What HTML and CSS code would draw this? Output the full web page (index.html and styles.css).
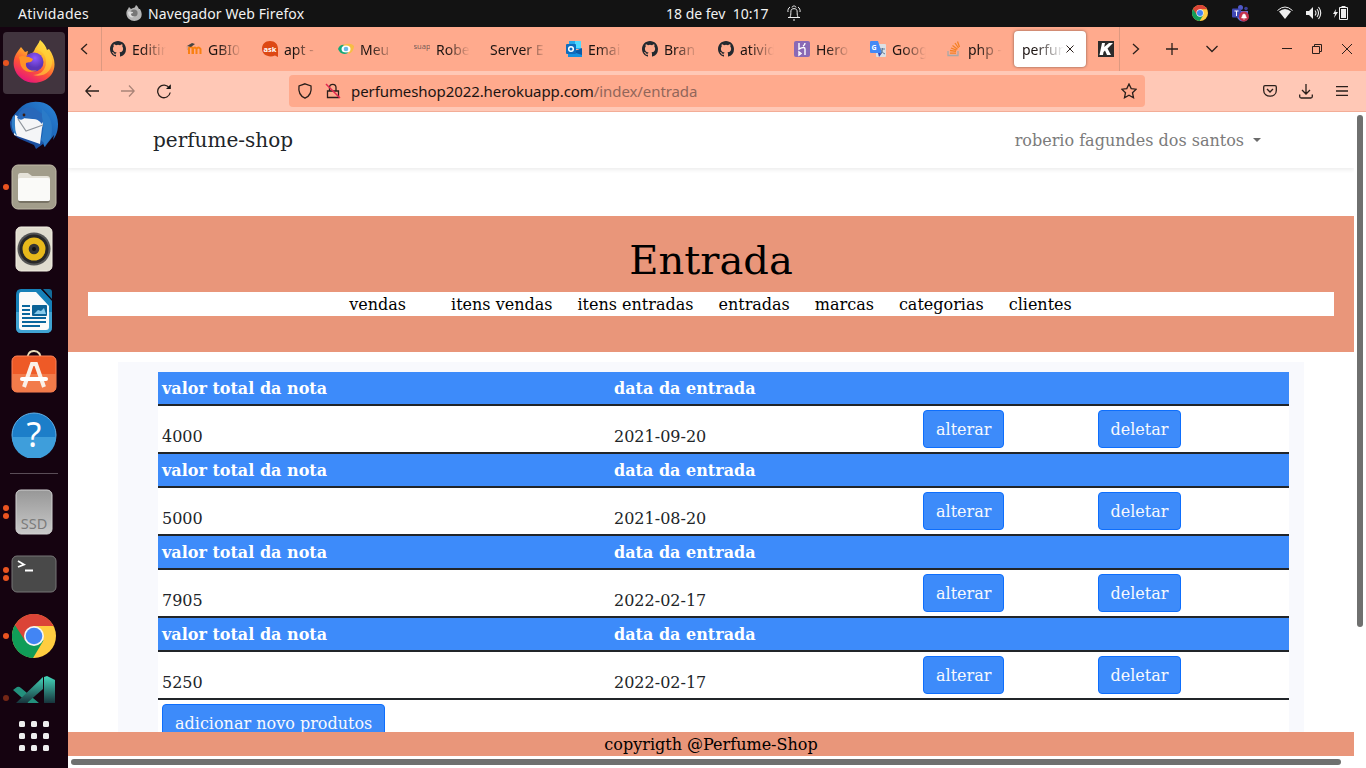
FILE: index.html
```html
<!DOCTYPE html>
<html lang="pt-BR">
<head>
<meta charset="utf-8">
<title>perfume-shop</title>
<link rel="stylesheet" href="styles.css">
</head>
<body>
<svg width="0" height="0" class="defs">
  <defs>
    <linearGradient id="ffBody" x1="0.8" y1="0" x2="0.3" y2="1"><stop offset="0" stop-color="#fff44f"/><stop offset=".35" stop-color="#ffb32c"/><stop offset=".65" stop-color="#ff5634"/><stop offset="1" stop-color="#e5117f"/></linearGradient>
    <radialGradient id="ffGlobe" cx=".55" cy=".3"><stop offset="0" stop-color="#9059ff"/><stop offset="1" stop-color="#5b35b8"/></radialGradient>
    <linearGradient id="tb" x1="1" y1="0" x2="0" y2="1"><stop offset="0" stop-color="#2c86d8"/><stop offset=".5" stop-color="#1b62b5"/><stop offset="1" stop-color="#17307c"/></linearGradient>
    <linearGradient id="ssd" x1="0" y1="0" x2="0" y2="1"><stop offset="0" stop-color="#979797"/><stop offset="1" stop-color="#c9c9c9"/></linearGradient>
    <linearGradient id="vs" gradientUnits="userSpaceOnUse" x1="0" y1="2" x2="0" y2="28"><stop offset="0" stop-color="#43d3b8"/><stop offset="1" stop-color="#17343c"/></linearGradient>
    <symbol id="octocat" viewBox="0 0 16 16"><path fill="#24292f" d="M8 0C3.58 0 0 3.58 0 8c0 3.54 2.29 6.53 5.47 7.59.4.07.55-.17.55-.38 0-.19-.01-.82-.01-1.49-2.01.37-2.53-.49-2.69-.94-.09-.23-.48-.94-.82-1.13-.28-.15-.68-.52-.01-.53.63-.01 1.08.58 1.23.82.72 1.21 1.87.87 2.33.66.07-.52.28-.87.51-1.07-1.78-.2-3.64-.89-3.64-3.95 0-.87.31-1.59.82-2.15-.08-.2-.36-1.02.08-2.12 0 0 .67-.21 2.2.82a7.6 7.6 0 0 1 4 0c1.53-1.04 2.2-.82 2.2-.82.44 1.1.16 1.92.08 2.12.51.56.82 1.27.82 2.15 0 3.07-1.87 3.75-3.65 3.95.29.25.54.73.54 1.48 0 1.07-.01 1.93-.01 2.2 0 .21.15.46.55.38A8.01 8.01 0 0 0 16 8c0-4.42-3.58-8-8-8z"/></symbol>
    <symbol id="chrome" viewBox="0 0 44 44">
      <circle cx="22" cy="22" r="22" fill="#ffcd40"/>
      <path d="M22 22 2.900 11A22 22 0 0 0 21 44L31.500 26.500z" fill="#109d58"/>
      <path d="M22 12h19.600A22 22 0 0 0 2.900 11L13.300 27z" fill="#db4437"/>
      <circle cx="22" cy="22" r="10" fill="#f5f5f5"/><circle cx="22" cy="22" r="8.300" fill="#4285f4"/>
    </symbol>
    <symbol id="fox" viewBox="0 0 42 44">
      <path d="M27 0c4 3 6 7 7 10l2-1c9 12 7 27-6 32-12 5-26-1-29-14-1-5 0-11 4-16L8 7l4 5 3-1-1 4c4-1 6-2 7-4 1-4 5-7 6-11z" fill="url(#ffBody)"/>
      <circle cx="21" cy="22" r="9.500" fill="url(#ffGlobe)"/>
      <path d="M24 10c5 1 9 5 9 12 0 9-7 13-13 13 12 3 20-5 19-15C38 14 33 12 27 0c0 4-2 7-3 10z" fill="#ffd43a" opacity=".65"/>
      <path d="M6 17c4-2 6 0 10 0l4 2c-1 4-5 3-7 4-1 6 5 9 11 7-8 5-17 0-17-9z" fill="#ff9226"/>
    </symbol>
  </defs>
</svg>
<div class="desktop">
  <header class="topbar">
    <span class="activities">Atividades</span>
    <svg class="app-icon" width="16" height="16" viewBox="0 0 16 16"><path d="M10 0c2 1 2 3 3 4l1 0c3 5 2 10-3 11.500C6 17 1 14 .500 9.500 0 7 1 5 2 4l1-2 2 2 2-1c2 0 2-1 3-3z" fill="#b5b5b5"/><circle cx="8" cy="8" r="3.600" fill="#777"/><path d="M2 7c2-1 3 0 5 0 0 2-2 1-2 2 0 2 2 3 4 2-3 3-7 1-7-4z" fill="#ddd"/></svg>
    <span class="app-name">Navegador Web Firefox</span>
    <span class="clock">18 de fev&nbsp; 10:17</span>
    <svg class="bell" width="14" height="16" viewBox="0 0 14 16" fill="none" stroke="#eee"><path d="M1 12.500h12M3 12c1.200-2 .600-4 1-6.500C4.500 3 9.500 3 10 5.500c.400 2.500-.200 4.500 1 6.500M6 15h2M1 7c-.500-2 .500-4 2-5M13 7c.500-2-.500-4-2-5M5 2.500C5 .500 9 .500 9 2.500"/></svg>
    <div class="tray">
      <svg class="tray-chrome" width="16" height="16"><use href="#chrome"/></svg>
      <svg class="tray-teams" width="17" height="17" viewBox="0 0 17 17"><circle cx="8.500" cy="2.500" r="2.500" fill="#5059c9"/><circle cx="14" cy="3.500" r="1.800" fill="#3b419c"/><path d="M5 6h11v6c0 6-9 6-11 0z" fill="#6870d6"/><rect y="3.500" width="9" height="9" rx="1" fill="#4048b5"/><path d="M2.500 6h4M4.500 6v5" stroke="#fff"/><circle cx="12" cy="11.500" r="5" fill="#c4314b"/><path d="M9.500 13c1-1 .500-4 2.500-4s1.500 3 2.500 4zM11 14h2" fill="#fff" stroke="#fff" stroke-width=".6"/></svg>
      <svg class="tray-wifi" width="16" height="14" viewBox="0 0 16 14"><path d="M.500 4.500Q8-2.500 15.500 4.500" fill="none" stroke="#eee"/><path d="M2 5.500Q8 .500 14 5.500L8 13z" fill="#eee"/></svg>
      <svg class="tray-vol" width="17" height="14" viewBox="0 0 17 14"><path d="M0 5h3l4-4v12L3 9H0z" fill="#eee"/><path d="M9 4.500q2 2.500 0 5M11 3q3 4 0 8M12.500 1q4.500 6 0 12" fill="none" stroke="#eee" stroke-width="1.100"/></svg>
      <svg width="15" height="16" viewBox="0 0 15 16"><path d="M3 4 0 9h2l-1 4 4-6H2.500z" fill="#eee"/><path d="M8.500 1.500h4M6.500 2.500h8v12h-8z" fill="none" stroke="#eee"/><path d="M8 4h5v9H8z" fill="#eee"/></svg>
    </div>
  </header>

  <nav class="dock">
    <div class="slot run focused"><svg class="up" width="42" height="44"><use href="#fox"/></svg></div>
    <div class="slot"><svg width="48" height="48" viewBox="0 0 48 48"><path d="M9 8Q17-1 30 1c10 1 18 10 18 22 0 9-3 13-5 16l1-5-7 9-2 3-2-3-7 5-2-4-14-6C2 34 0 28 0 21l3-6z" fill="url(#tb)"/><path d="M5 14 12 17 34 19l-2 8-2 16L4 34z" fill="#f4f5f7"/><path d="m8 18 8 12 17-6" fill="none" stroke="#8f959d" stroke-width="1.200"/><path d="M7 17Q10 4 24 7L35 15q-1 4-3 8-5-7-14-6l-3-1q-3 5-8 1z" fill="#2868ba"/><path d="M32 8q13 9 9 29l-7 9 0-4-3-3q4-13 1-23z" fill="#2b7bc8"/><circle cx="14" cy="14" r="1.400" fill="#3b1c12"/><path d="M3 15Q-1 28 7 35q-3-8-2-19z" fill="#2f80c9"/></svg></div>
    <div class="slot run"><svg width="46" height="46" viewBox="0 0 46 46"><rect x="1" y="1" width="44" height="44" rx="6" fill="#a29d8b" stroke="#c1bba8"/><path d="M7 11q0-2 2-2h8l4 4h15q3 0 3 3v20q0 3-3 3H10q-3 0-3-3z" fill="#787365"/><path d="M7 11q0-2 2-2h8l4 3h15q3 0 3 3v20q0 2-3 2H9q-2 0-2-2z" fill="#e5e2d9"/><rect x="7" y="14" width="32" height="23" rx="2" fill="#fafaf8"/></svg></div>
    <div class="slot"><svg width="38" height="46" viewBox="0 0 38 46"><rect x="1" y="1" width="36" height="44" rx="5" fill="#e0dccf" stroke="#f4f0e4"/><circle cx="19" cy="23" r="16.500" fill="#555"/><circle cx="19" cy="23" r="14.500" fill="#282828"/><circle cx="19" cy="23" r="11.500" fill="#e8b91b"/><circle cx="19" cy="23" r="5.300" fill="#353535"/><circle cx="19" cy="23" r="2" fill="#111"/></svg></div>
    <div class="slot"><svg width="38" height="46" viewBox="0 0 38 46"><path d="M6 1h20l11 11v27q0 6-6 6H6q-5 0-5-6V7q0-6 5-6z" fill="#1680b8"/><path d="M1 24h36v15q0 6-6 6H6q-5 0-5-6z" fill="#40a3d2"/><path d="M6 4h15l13 14v21q0 3-3 3H7q-3 0-3-3V7q0-3 2-3z" fill="#fafafa"/><path d="M25 0h13v14z" fill="#150310"/><path d="M28 1h6q3 0 3 3v7z" fill="#136c9b"/><path d="M7 18h8M7 22h8M7 26h8M7 30h24M7 34h24M7 38h18" stroke="#09669d" stroke-width="1.800"/><rect x="17" y="17" width="15" height="11" rx="1" fill="#0b6296"/><path d="m19 26 4-4 3 1 3-3 2 6z" fill="#88caeb"/></svg></div>
    <div class="slot"><svg class="up" width="46" height="46" viewBox="0 0 46 46"><path d="M16 12Q16 2 23 2t7 10" fill="none" stroke="#eadfba" stroke-width="1.800"/><rect x="1" y="7" width="44" height="36" rx="5" fill="#ee5a27" stroke="#ff8358"/><path d="M1 25h44v13q0 5-5 5H6q-5 0-5-5z" fill="#f27b4a"/><path d="m13 38 8-23h4l8 23" fill="none" stroke="#faf0e8" stroke-width="4"/><rect x="9" y="28" width="28" height="4" rx="2" fill="#fff"/></svg></div>
    <div class="slot"><svg width="46" height="46" viewBox="0 0 46 46"><circle cx="23" cy="23" r="22" fill="#1c7ec9" stroke="#63b2e8"/><path d="M1 25h44a22 22 0 0 1-44 0z" fill="#3e9edb"/><text x="23" y="35" text-anchor="middle" font-family="Noto Sans" font-size="34" fill="#fff">?</text></svg></div>
    <div class="rule"></div>
    <div class="slot run2"><svg width="38" height="46" viewBox="0 0 38 46"><rect x="1" y="1" width="36" height="44" rx="5" fill="url(#ssd)" stroke="#d2d2d2"/><text x="19" y="39.500" text-anchor="middle" font-family="Noto Sans" font-size="14.500" fill="#7b7b7b">SSD</text></svg></div>
    <div class="slot run2"><svg width="46" height="38" viewBox="0 0 46 38"><rect x="1" y="1" width="44" height="36" rx="5" fill="#494949" stroke="#777"/><path d="m7 6 6 3.500L7 12M14 15.500h8" fill="none" stroke="#fff" stroke-width="1.800"/></svg></div>
    <div class="slot run"><svg width="44" height="44"><use href="#chrome"/></svg></div>
    <div class="slot run clipped"><svg width="44" height="28" viewBox="0 0 44 28"><path d="M1 15l4-3q2-1 4 1l18 15H16z" fill="#23917d"/><path d="M31 2v12L15 28H4z" fill="url(#vs)"/><path d="M32 2l3-1 8 4v23H32z" fill="url(#vs)"/></svg></div>
    <svg class="apps" width="30" height="30" viewBox="0 0 30 30" fill="#eee"><rect width="6" height="6" rx="1.500"/><rect x="12" width="6" height="6" rx="1.500"/><rect x="24" width="6" height="6" rx="1.500"/><rect y="12" width="6" height="6" rx="1.500"/><rect x="12" y="12" width="6" height="6" rx="1.500"/><rect x="24" y="12" width="6" height="6" rx="1.500"/><rect y="24" width="6" height="6" rx="1.500"/><rect x="12" y="24" width="6" height="6" rx="1.500"/><rect x="24" y="24" width="6" height="6" rx="1.500"/></svg>
  </nav>

  <main class="browser">
    <div class="tabstrip">
      <div class="scroll-left"><svg width="8" height="12" viewBox="0 0 8 12" class="line"><path d="M7 1 1.500 6 7 11"/></svg></div>
      <div class="tabs">
        <div class="tab"><svg width="16" height="16"><use href="#octocat"/></svg><span>Editin</span></div>
        <div class="tab"><svg width="16" height="16" viewBox="0 0 16 16"><path d="M3 13V7q2-2 3.500 0v6M7 13V8q2-3 3.500 0v5M10.500 8q2-3 4 0v5" fill="none" stroke="#f98012" stroke-width="2"/><path d="m1 5 5-3 3 1-4 3z" fill="#444"/><path d="m1 5 .500 4" stroke="#b98" stroke-width=".7"/></svg><span>GBI0</span></div>
        <div class="tab"><svg width="16" height="16" viewBox="0 0 16 16"><path d="M8 0c5 0 8 3 8 8v8l-3-1.500C7 17 0 14 0 8c0-5 3-8 8-8z" fill="#dd4814"/><text x="8" y="10.500" text-anchor="middle" font-family="Open Sans" font-weight="700" font-size="7.500" fill="#fff">ask</text></svg><span>apt -</span></div>
        <div class="tab"><svg width="16" height="16" viewBox="0 0 16 16"><path d="M0 8q2-5 7-4l3 8q-7 3-10-4z" fill="#17a878"/><path d="M5 4q8-3 11 1 0 5-5 8z" fill="#f7bd45"/><ellipse cx="8" cy="8" rx="4.500" ry="3.500" fill="#fff"/><circle cx="8" cy="8" r="2.300" fill="#6bb8e5"/></svg><span>Meu</span></div>
        <div class="tab"><svg width="16" height="16" viewBox="0 0 16 16"><text y="8" x="-.500" font-family="Open Sans" font-size="7.600" fill="#735b57">suap</text></svg><span>Robe</span></div>
        <div class="tab wide"><span>Server E</span></div>
        <div class="tab"><svg width="16" height="16" viewBox="0 0 16 16"><rect x="3" width="12" height="8" fill="#28a8ea"/><path d="M9 0h6v7H9z" fill="#50d9ff"/><path d="M2 9h14v7H2z" fill="#1490df"/><path d="m7 11 9-4v7z" fill="#0a5aa8"/><rect y="3" width="10" height="10" rx="1" fill="#0f6cbd"/><circle cx="5" cy="8" r="2.300" fill="none" stroke="#fff" stroke-width="1.500"/></svg><span>Emai</span></div>
        <div class="tab"><svg width="16" height="16"><use href="#octocat"/></svg><span>Bran</span></div>
        <div class="tab"><svg width="16" height="16"><use href="#octocat"/></svg><span>ativid</span></div>
        <div class="tab"><svg width="16" height="16" viewBox="0 0 16 16"><rect width="16" height="16" rx="2" fill="#8a69b5"/><path d="M5 2v6q6-3 6 0v6M11 2q0 2-2 3M5 11v3l2-1.500z" fill="none" stroke="#fff" stroke-width="1.400"/></svg><span>Hero</span></div>
        <div class="tab"><svg width="16" height="16" viewBox="0 0 16 16"><rect x="6" y="3" width="10" height="13" rx="1" fill="#dbe0e5"/><path d="M0 1q0-1 1-1h7l4 12H1q-1 0-1-1z" fill="#4489f5"/><path d="m8 12 4 0-3 4z" fill="#3547b8"/><text x="1.500" y="8.500" font-family="Open Sans" font-weight="700" font-size="7" fill="#fff">G</text><path d="M10 8h5M12.500 7v1q0 3-2 5M11 9q1 3 4 4" stroke="#607d9b" fill="none"/></svg><span>Goog</span></div>
        <div class="tab"><svg width="16" height="16" viewBox="0 0 16 16"><path d="M2 10v4.500h10V10" stroke="#a8a8a8" fill="none" stroke-width="1.300"/><path d="M4 12.200h6M4 9.500l6 .800M5 7l5.500 2.200M6.500 4.500l5 3.800M9 2l3.500 5M11.500.500 13.500 6" stroke="#f48024" stroke-width="1.300"/></svg><span>php -</span></div>
        <div class="tab active"><span>perfum</span><svg width="8" height="8" viewBox="0 0 8 8" class="line thin"><path d="m.500.500 7 7M7.500.500l-7 7"/></svg></div>
        <div class="tab last"><svg width="16" height="16" viewBox="0 0 16 16"><rect width="16" height="16" fill="#2b2b2b"/><path d="M4 2h3l-.800 4L11 2h4L9.500 7.500 13 14H9L7 9.500 5.500 11 5 14H1.500z" fill="#fff"/></svg></div>
      </div>
      <div class="strip-tools">
        <svg class="line" width="8" height="12" viewBox="0 0 8 12"><path d="m1 1 5.500 5L1 11"/></svg>
        <svg class="line plus" width="12" height="12" viewBox="0 0 12 12"><path d="M6 0v12M0 6h12"/></svg>
        <svg class="line down" width="12" height="8" viewBox="0 0 12 8"><path d="m.500 1 5.500 5.500L11.500 1"/></svg>
        <svg class="line thin min" width="10" height="10" viewBox="0 0 10 10"><path d="M0 4.500h10"/></svg>
        <svg class="line thin max" width="10" height="10" viewBox="0 0 10 10"><path d="M.500 2.500h7v7h-7zM2.500 2.500v-2h7v7h-2"/></svg>
        <svg class="line thin close" width="10" height="10" viewBox="0 0 10 10"><path d="m0 0 10 10M10 0 0 10"/></svg>
      </div>
    </div>

    <div class="toolbar">
      <svg class="line back" width="14" height="12" viewBox="0 0 14 12"><path d="M14 6H1M6 .500.800 6 6 11.500"/></svg>
      <svg class="line fwd" width="14" height="12" viewBox="0 0 14 12"><path d="M0 6h13M8 .500 13.200 6 8 11.500"/></svg>
      <svg class="line reload" width="16" height="16" viewBox="0 0 16 16"><path d="M13.300 5A6.300 6.300 0 1 0 14.200 9.500"/><path d="M14.800 1.200V6H10z" fill="#111" stroke="none"/></svg>
      <div class="urlbar">
        <svg class="line shield" width="16" height="16" viewBox="0 0 16 16"><path d="M8 .800 14 3c.700 5-1 10-6 12.200C3 13 1.300 8 2 3z"/></svg>
        <svg class="line lock" width="16" height="16" viewBox="0 0 16 16"><path d="M4.500 8V4.500C4.500.200 11 .200 11 4.500V8M2.500 8h11v6.500h-11z"/><path d="m1 1 14 14" stroke="#e22850" stroke-width="1.500"/></svg>
        <span class="url"><b>perfumeshop2022.herokuapp.com</b>/index/entrada</span>
        <svg class="line star" width="16" height="16" viewBox="0 0 16 16"><path d="m8 1 2.200 4.600 5 .600-3.700 3.500 1 5L8 12.200l-4.500 2.500 1-5L.800 6.200l5-.600z"/></svg>
      </div>
      <div class="actions">
        <svg class="line" width="14" height="12" viewBox="0 0 14 12"><path d="M2 .700h10q1.300 0 1.300 1.300v3.500c0 7.500-12.600 7.500-12.600 0V2Q.700.700 2 .700zM4 4l3 3 3-3"/></svg>
        <svg class="line" width="14" height="15" viewBox="0 0 14 15"><path d="M7 0v10M3 6l4 4 4-4M.700 10.500v2q0 1.500 1.500 1.500h9.600q1.500 0 1.500-1.500v-2"/></svg>
        <svg class="line" width="12" height="10" viewBox="0 0 12 10"><path d="M0 .700h12M0 5h12M0 9.300h12"/></svg>
      </div>
    </div>

    <div class="viewport">
      <div class="page">
        <div class="navbar"><span class="brand">perfume-shop</span><span class="user">roberio fagundes dos santos<i class="caret"></i></span></div>
        <header class="hero">
          <h1>Entrada</h1>
          <nav class="menu"><a class="first">vendas</a><a>itens vendas</a><a>itens entradas</a><a>entradas</a><a>marcas</a><a>categorias</a><a>clientes</a></nav>
        </header>
        <section class="panel">
          <table class="notes">
            <colgroup><col class="c1"><col class="c2"><col class="c3"><col class="c4"></colgroup>
            <tr class="head"><th>valor total da nota</th><th>data da entrada</th><th></th><th></th></tr>
            <tr><td>4000</td><td>2021-09-20</td><td><a class="btn">alterar</a></td><td><a class="btn del">deletar</a></td></tr>
            <tr class="head"><th>valor total da nota</th><th>data da entrada</th><th></th><th></th></tr>
            <tr><td>5000</td><td>2021-08-20</td><td><a class="btn">alterar</a></td><td><a class="btn del">deletar</a></td></tr>
            <tr class="head"><th>valor total da nota</th><th>data da entrada</th><th></th><th></th></tr>
            <tr><td>7905</td><td>2022-02-17</td><td><a class="btn">alterar</a></td><td><a class="btn del">deletar</a></td></tr>
            <tr class="head"><th>valor total da nota</th><th>data da entrada</th><th></th><th></th></tr>
            <tr><td>5250</td><td>2022-02-17</td><td><a class="btn">alterar</a></td><td><a class="btn del">deletar</a></td></tr>
            <tr><td colspan="4"><a class="btn">adicionar novo produtos</a></td></tr>
          </table>
        </section>
        <footer class="footer">copyrigth @Perfume-Shop</footer>
      </div>
      <div class="vbar"><div class="vthumb"></div></div>
      <div class="hbar"><div class="hthumb"></div></div>
    </div>
  </main>
</div>
</body>
</html>
```

FILE: styles.css
```css
* { box-sizing: border-box; }
body { margin: 0; overflow: hidden; }
svg { display: block; flex: none; }
.defs { position: absolute; }

.desktop {
  width: 1366px; height: 768px;
  display: grid; grid-template: 27px 741px / 68px 1298px;
  font-family: "Noto Sans", "Open Sans", sans-serif;
}

/* system bar */
.topbar {
  grid-column: 1 / 3; display: flex; align-items: center;
  background: #131313; color: #f2f2f2; font-size: 14px; white-space: nowrap;
}
.activities { width: 109px; padding-left: 18px; letter-spacing: .3px; }
.app-icon { margin: -2px 6px 0 17px; }
.app-name { width: 518px; letter-spacing: .1px; }
.clock { width: 121px; letter-spacing: 0; }
.bell { margin-top: -2px; }
.tray { display: flex; align-items: center; margin-left: auto; padding-right: 18px; }
.tray svg { margin-top: -1px; }
.tray-chrome { margin-right: 24px; }
.tray-teams { margin-right: 28px; }
.tray-wifi { margin-right: 13px; }
.tray-vol { margin-right: 10px; }

/* dock */
.dock {
  display: flex; flex-direction: column; align-items: center;
  padding-top: 5px; background: #150310;
}
.slot { width: 62px; height: 62px; flex: none; display: grid; place-items: center; position: relative; }
.slot .up { margin-bottom: 3px; }
.focused { background: #41343e; border-radius: 4px; }
.run::before, .run2::before, .run2::after {
  content: ""; position: absolute; left: 0; top: 28px;
  width: 6px; height: 6px; border-radius: 50%; background: #e95420;
}
.run2::before { top: 24px; }
.run2::after { top: 32px; }
.rule { width: 48px; height: 1px; flex: none; margin: 7px 0; background: #5a4d57; }
.clipped { height: 36px; overflow: hidden; place-items: end center; }
.clipped::before { opacity: .45; }
.apps { margin-top: 18px; }

/* browser chrome */
.browser { display: grid; grid-template-rows: 44px 41px 656px; min-width: 0; }
.line { fill: none; stroke: #2a1f1b; stroke-width: 1.3; }
.thin { stroke-width: 1; }
.tabstrip { display: flex; background: #ffaa8d; }
.scroll-left {
  width: 34px; padding-left: 12px; display: flex; align-items: center;
  border-right: 1px solid #dd9980;
}
.tabs { width: 1018px; display: flex; gap: 4px; align-items: center; overflow: hidden; border-right: 1px solid #dd9980; }
.tab {
  width: 72px; height: 36px; flex: none; padding: 0 8px;
  display: flex; align-items: center; gap: 6px;
  font-size: 14px; color: #1c1412;
}
.tab span {
  width: 34px; overflow: hidden; white-space: nowrap;
  -webkit-mask-image: linear-gradient(90deg, #000 30%, transparent);
  mask-image: linear-gradient(90deg, #000 30%, transparent);
}
.tab.wide span { width: 56px; -webkit-mask-image: linear-gradient(90deg, #000 60%, transparent); mask-image: linear-gradient(90deg, #000 60%, transparent); }
.tab.active { background: #fff; border-radius: 4px; box-shadow: 0 0 3px rgba(0,0,0,.5); gap: 2px; }
.tab.active span { width: 42px; }
.strip-tools { display: flex; align-items: center; padding-left: 12px; }
.plus { margin-left: 26px; }
.down { margin-left: 28px; }
.min { margin-left: 64px; }
.max { margin-left: 20px; }
.close { margin-left: 20px; }

.toolbar {
  display: flex; align-items: center; padding-left: 17px;
  background: #ffc8b6; border-bottom: 1px solid #f3ad97;
}
.fwd { margin-left: 22px; opacity: .4; }
.reload { margin-left: 21px; }
.urlbar {
  width: 856px; height: 32px; margin-left: 117px; padding: 0 8px;
  display: flex; align-items: center;
  background: #ffaa8d; border-radius: 4px;
}
.lock { margin-left: 12px; }
.url { margin-left: 10px; font-size: 15px; color: #91665a; letter-spacing: -.08px; }
.url b { font-weight: 400; color: #1c1412; }
.star { margin-left: auto; }
.actions { display: flex; align-items: center; gap: 22px; margin-left: 118px; }
.actions svg:last-child { margin-left: 1px; }

/* page */
.viewport {
  display: grid; grid-template: 644px 12px / 1286px 12px;
  background: #fff; font: 16px/24px "DejaVu Serif", serif; color: #212529;
}
.page { position: relative; overflow: hidden; }
.navbar {
  height: 56px; padding: 0 93px 0 85px;
  display: flex; align-items: center; justify-content: space-between;
  box-shadow: 0 2px 4px rgba(0,0,0,.075);
}
.brand { font-size: 20px; }
.user { padding-top: 2px; color: #7b7b7b; }
.caret {
  display: inline-block; margin-left: 9px; vertical-align: 4px;
  border: 4px solid transparent; border-top-color: #6b6b6b; border-bottom: 0;
}
.hero { margin-top: 48px; height: 136px; padding: 20px; background: #e9967a; color: #000; }
.hero h1 { margin: 0 0 8px; font-size: 40px; line-height: 48px; font-weight: 400; text-align: center; }
.menu { display: flex; justify-content: center; gap: 25px; height: 24px; padding-right: 1px; line-height: 26px; background: #fff; }
.menu .first { margin-right: 20px; }
.panel { margin: 10px 50px 0; padding: 10px 15px 0 40px; background: #f8f9fd; }
.notes { width: 1131px; table-layout: fixed; border-collapse: separate; border-spacing: 0; background: #fff; }
.c1 { width: 452px; }
.c2 { width: 309px; }
.c3 { width: 175px; }
.c4 { width: 195px; }
.notes th, .notes td { padding: 4px 4px 3px; border-bottom: 2px solid #212529; text-align: left; vertical-align: bottom; }
.head { background: #3d8bfa; color: #fff; }
.notes th { height: 34px; }
.btn {
  display: inline-block; margin-bottom: 1px; padding: 7px 12px 5px; vertical-align: bottom;
  border: 1px solid #0d6efd; border-radius: 4px;
  background: #3d8bfa; color: #f8f9fd;
}
.btn.del { width: 83px; padding-right: 0; padding-left: 11.5px; }
.footer { position: absolute; left: 0; right: 0; bottom: 0; height: 24px; line-height: 26px; text-align: center; background: #e9967a; color: #000; }
.vbar { padding: 3px 0 0 3px; }
.vthumb { width: 6px; height: 512px; border-radius: 3px; background: #6f706f; }
.hbar { padding: 3px 0 0 3px; }
.hthumb { width: 1270px; height: 6px; border-radius: 3px; background: #6f706f; }
```
